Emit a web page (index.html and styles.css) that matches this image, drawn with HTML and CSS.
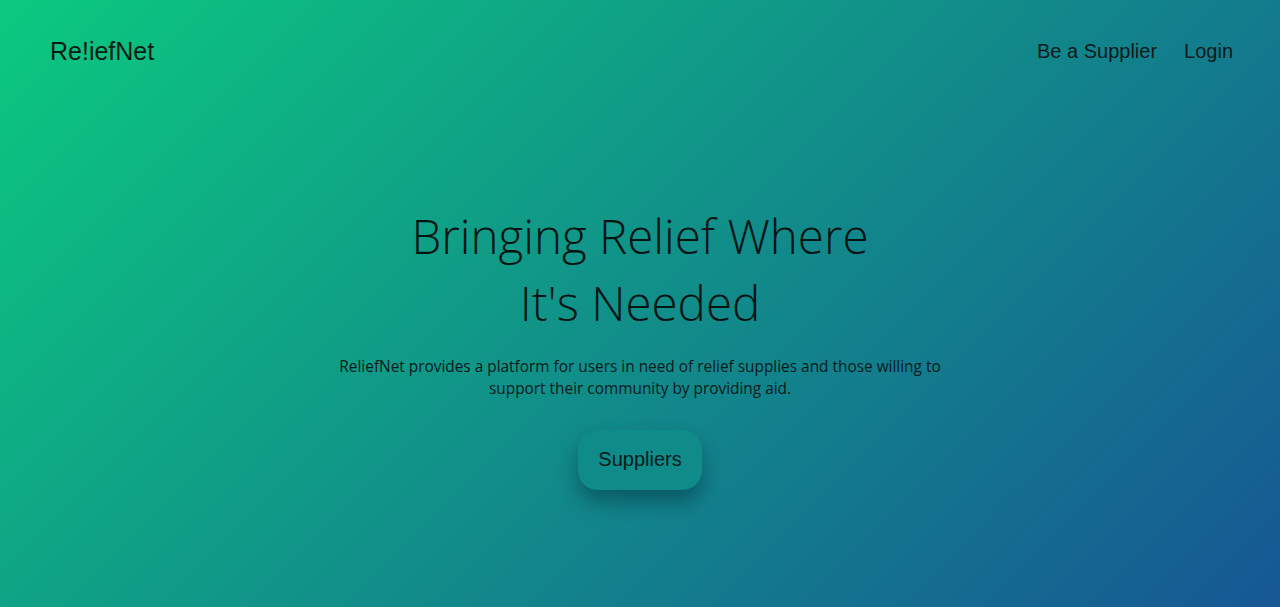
FILE: index.html
```html
<!DOCTYPE html>
<html lang="en">
<head>
<meta charset="utf-8">
<title>ReliefNet</title>
<link rel="stylesheet" href="styles.css">
</head>
<body>
<div class="page">
  <header class="topbar">
    <a class="logo" href="#">Re!iefNet</a>
    <nav class="nav">
      <a href="#">Be a Supplier</a>
      <a href="#">Login</a>
    </nav>
  </header>
  <main class="hero">
    <h1 class="title">Bringing Relief Where<br>It's Needed</h1>
    <p class="lead">ReliefNet provides a platform for users in need of relief supplies and those willing to support their community by providing aid.</p>
    <a class="cta" href="#">Suppliers</a>
  </main>
</div>
</body>
</html>
```

FILE: styles.css
```css
* { box-sizing: border-box; }
html, body { margin: 0; padding: 0; height: 100%; }
body {
  font-family: "Liberation Sans", Arial, sans-serif;
  color: #111;
}
.page {
  min-height: 100vh;
  display: flex;
  flex-direction: column;
  background: linear-gradient(135deg, #0bc97f 0%, #118f89 50%, #165794 100%);
}
a { color: inherit; text-decoration: none; }
.topbar {
  display: flex;
  justify-content: space-between;
  align-items: flex-start;
  padding: 36px 47px 0 50px;
  height: 100px;
}
.logo {
  font-size: 25px;
  line-height: 30px;
  color: #0d1a14;
}
.nav {
  display: flex;
  gap: 27px;
  padding-top: 3px;
}
.nav a {
  font-size: 20px;
  line-height: 24px;
  color: #0d1a1a;
}
.hero {
  flex: 1;
  display: flex;
  flex-direction: column;
  align-items: center;
  text-align: center;
  padding-top: 102px;
}
.title {
  margin: 0;
  font-family: "Open Sans", sans-serif;
  font-weight: 300;
  font-size: 47.5px;
  line-height: 67px;
  color: #061514;
}
.lead {
  margin: 20px 0 0;
  max-width: 640px;
  font-family: "Open Sans", sans-serif;
  font-size: 15.4px;
  line-height: 21.5px;
  color: #0a1a1a;
}
.cta {
  margin-top: 31px;
  padding: 17px 20px 19px;
  font-size: 20px;
  line-height: 24px;
  border-radius: 20px;
  background: #0f8b89;
  color: #081a1c;
  box-shadow: 0 12px 20px rgba(0, 30, 45, 0.4);
}
```
